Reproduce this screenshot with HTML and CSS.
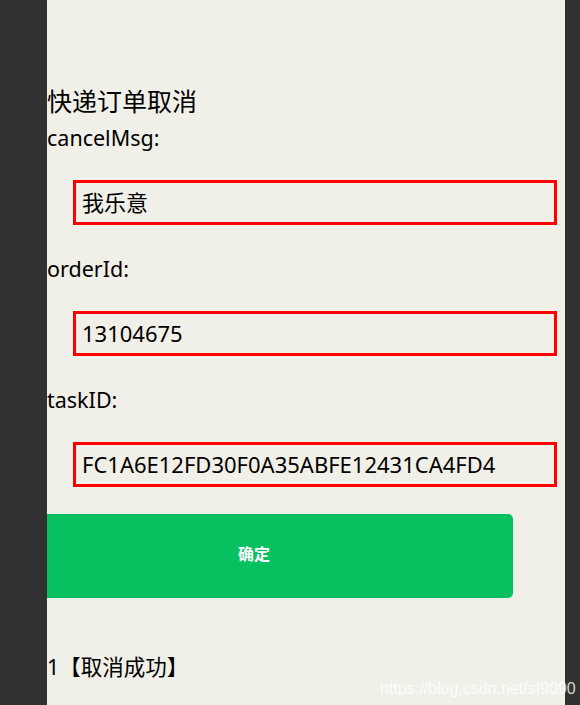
FILE: index.html
```html
<!DOCTYPE html>
<html lang="zh-CN">
<head>
<meta charset="utf-8">
<title>快递订单取消</title>
<link rel="stylesheet" href="styles.css">
</head>
<body>
<div class="frame">
  <div class="side side-left"></div>
  <main class="page">
    <h1 class="title">快递订单取消</h1>
    <div class="field">
      <div class="label">cancelMsg:</div>
      <div class="input">我乐意</div>
    </div>
    <div class="field">
      <div class="label">orderId:</div>
      <div class="input">13104675</div>
    </div>
    <div class="field">
      <div class="label">taskID:</div>
      <div class="input">FC1A6E12FD30F0A35ABFE12431CA4FD4</div>
    </div>
    <button class="confirm">确定</button>
    <div class="result">1【取消成功】</div>
  </main>
  <div class="side side-right"></div>
  <div class="watermark">https://blog.csdn.net/sf9090</div>
</div>
</body>
</html>
```
FILE: styles.css
```css
html, body {
  margin: 0;
  padding: 0;
  height: 100%;
}
body {
  font-family: "Noto Sans", "Noto Sans CJK SC", sans-serif;
  color: #000;
  background: #f0efe8;
}
.frame {
  position: relative;
  display: flex;
  height: 705px;
  overflow: hidden;
}
.side {
  background: #313131;
  flex: none;
}
.side-left { width: 47px; }
.side-right { width: 15px; }
.page {
  flex: 1;
  background: #f0efe8;
  overflow: hidden;
  padding-top: 83px;
}
.title {
  margin: 0;
  font-family: "Noto Sans CJK SC", sans-serif;
  font-weight: 400;
  font-size: 25px;
  line-height: 34px;
}
.field {
  display: flex;
  flex-direction: column;
}
.label {
  font-size: 21.5px;
  line-height: 28px;
  height: 28px;
  margin-top: 30px;
  margin-bottom: 28px;
}
.title + .field .label {
  margin-top: 7px;
}
.input {
  margin-left: 26px;
  width: 472px;
  height: 39px;
  border: 3px solid #ff0000;
  padding-left: 6px;
  font-size: 22px;
  line-height: 39px;
  white-space: nowrap;
}
.confirm {
  display: block;
  margin: 27px 0 0 -52px;
  width: 518px;
  height: 84px;
  border: none;
  border-radius: 5px;
  background: #07c160;
  color: #fff;
  font-family: "Noto Sans CJK SC", sans-serif;
  font-weight: 700;
  font-size: 16px;
  padding: 0 0 6px;
}
.result {
  margin-top: 55px;
  font-size: 21.5px;
  line-height: 28px;
}
.watermark {
  position: absolute;
  left: 380px;
  top: 680px;
  font-family: "Liberation Sans", sans-serif;
  font-size: 16px;
  color: rgba(255, 255, 255, 0.8);
}
```
